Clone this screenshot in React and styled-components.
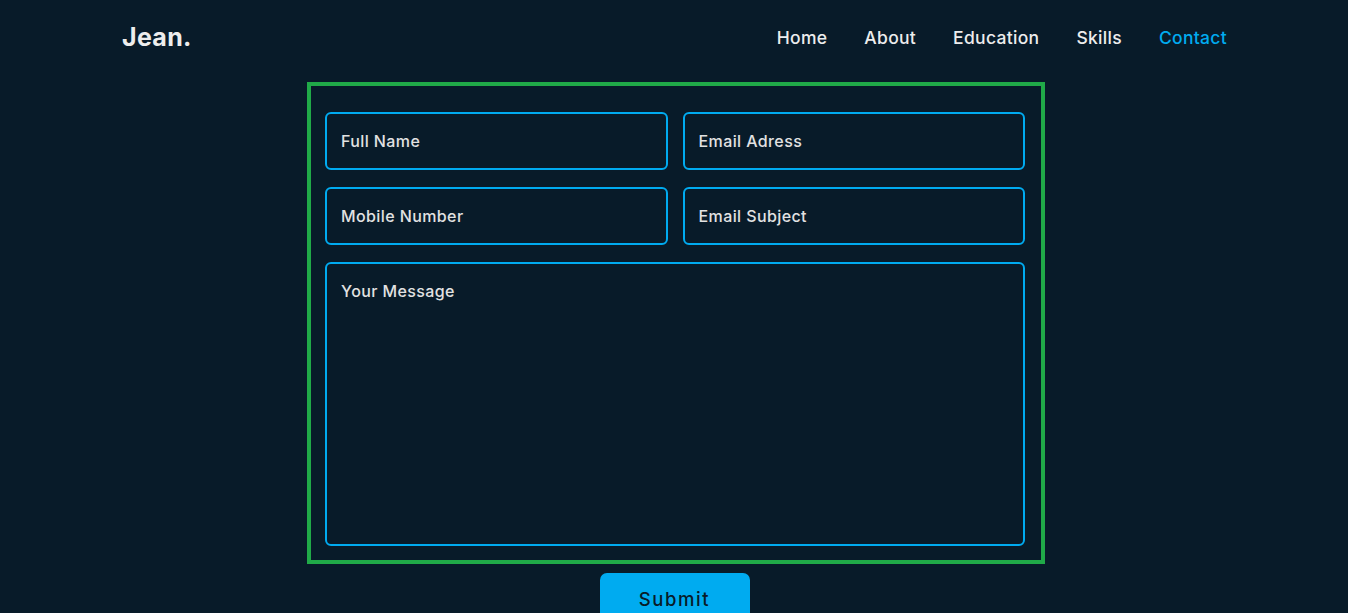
import React from "react";
import styled, { createGlobalStyle } from "styled-components";

const GlobalStyle = createGlobalStyle`
  * {
    box-sizing: border-box;
  }
  body {
    margin: 0;
    background-color: #081b29;
    font-family: "Inter", "Noto Sans", sans-serif;
    overflow: hidden;
  }
`;

const Page = styled.div`
  width: 1348px;
  height: 613px;
  background-color: #081b29;
`;

const Header = styled.header`
  display: flex;
  justify-content: space-between;
  align-items: center;
  height: 74px;
  padding: 0 121px 0 122px;
`;

const Logo = styled.a`
  font-size: 25px;
  font-weight: 700;
  color: #ededed;
  letter-spacing: 0.3px;
`;

const Nav = styled.nav`
  display: flex;
  gap: 37px;
`;

const NavLink = styled.a`
  font-size: 17.5px;
  font-weight: 500;
  letter-spacing: 0.3px;
  color: ${(props) => (props.$active ? "#00abf0" : "#ededed")};
`;

const Section = styled.section`
  display: flex;
  flex-direction: column;
  align-items: center;
  padding-top: 8px;
  padding-left: 4px;
`;

const Form = styled.form`
  width: 738px;
  border: 4px solid #20aa48;
  padding: 26px 16px 14px 14px;
  display: flex;
  flex-direction: column;
  gap: 17px;
`;

const Row = styled.div`
  display: grid;
  grid-template-columns: 1fr 1fr;
  gap: 15px;
`;

const Field = styled.input`
  height: 58px;
  width: 100%;
  padding: 0 14px;
  background: transparent;
  border: 2px solid #00abf0;
  border-radius: 6px;
  font-family: inherit;
  font-size: 16px;
  font-weight: 500;
  letter-spacing: 0.4px;
  color: #ededed;
  outline: none;
  &::placeholder {
    color: #e2e2e2;
  }
`;

const Message = styled.textarea`
  height: 284px;
  width: 100%;
  padding: 17px 14px;
  background: transparent;
  border: 2px solid #00abf0;
  border-radius: 6px;
  font-family: inherit;
  font-size: 16px;
  font-weight: 500;
  letter-spacing: 0.4px;
  color: #ededed;
  resize: none;
  outline: none;
  &::placeholder {
    color: #e2e2e2;
  }
`;

const SubmitButton = styled.button`
  margin-top: 9px;
  margin-right: 3px;
  width: 150px;
  height: 52px;
  background-color: #00abf0;
  border: none;
  border-radius: 7px;
  font-family: inherit;
  font-size: 18.5px;
  font-weight: 500;
  letter-spacing: 1.6px;
  color: #081b29;
`;

function App() {
  return (
    <Page>
      <GlobalStyle />
      <Header>
        <Logo>Jean.</Logo>
        <Nav>
          <NavLink>Home</NavLink>
          <NavLink>About</NavLink>
          <NavLink>Education</NavLink>
          <NavLink>Skills</NavLink>
          <NavLink $active>Contact</NavLink>
        </Nav>
      </Header>
      <Section>
        <Form>
          <Row>
            <Field type="text" placeholder="Full Name" />
            <Field type="email" placeholder="Email Adress" />
          </Row>
          <Row>
            <Field type="number" placeholder="Mobile Number" />
            <Field type="text" placeholder="Email Subject" />
          </Row>
          <Message placeholder="Your Message" />
        </Form>
        <SubmitButton type="submit">Submit</SubmitButton>
      </Section>
    </Page>
  );
}

export default App;
